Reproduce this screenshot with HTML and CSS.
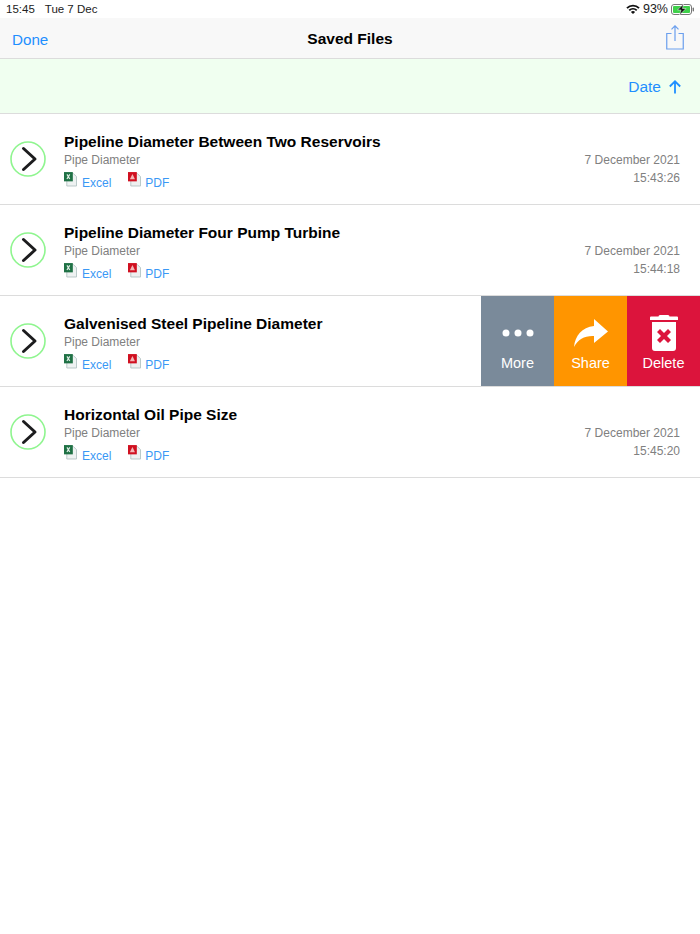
FILE: index.html
```html
<!DOCTYPE html>
<html lang="en">
<head>
<meta charset="utf-8">
<title>Saved Files</title>
<link rel="stylesheet" href="styles.css">
</head>
<body>
<svg class="defs" width="0" height="0" aria-hidden="true">
  <defs>
    <symbol id="chev" viewBox="0 0 36 36">
      <circle cx="18" cy="18" r="17" fill="#fff" stroke="#8ff58f" stroke-width="1.6"/>
      <path d="M13.500 7.500 L25 18 L13.500 28.500" fill="none" stroke="#1c1c1e" stroke-width="3" stroke-linecap="round" stroke-linejoin="round"/>
    </symbol>
    <symbol id="xls" viewBox="0 0 14 16">
      <path d="M3 1.500h7l3.500 3.500v10H3z" fill="#eef2f2" stroke="#b4c4c4" stroke-width="1"/>
      <rect x="0" y="0" width="9.500" height="10" fill="#1f7145"/>
      <path d="M3.200 2.500l3 5M6.200 2.500l-3 5" stroke="#dfeee5" stroke-width="1.300"/>
    </symbol>
    <symbol id="pdf" viewBox="0 0 14 16">
      <path d="M3 1.500h7l3.500 3.500v10H3z" fill="#eef0f0" stroke="#b4c4c4" stroke-width="1"/>
      <rect x="0" y="0" width="9.500" height="10" fill="#d01020"/>
      <path d="M4.800 2L2 7.800h5.500z" fill="#f3b6b6"/>
    </symbol>
  </defs>
</svg>

<header class="status">
  <div class="status-left"><span>15:45</span><span>Tue 7 Dec</span></div>
  <div class="status-right">
    <svg class="wifi" width="14" height="10" viewBox="0 0 14 10"><path d="M0.300 3.400a9.600 9.600 0 0 1 13.400 0l-1.300 1.300a7.800 7.800 0 0 0-10.800 0zM2.600 5.700a6.400 6.400 0 0 1 8.800 0L10.100 7a4.600 4.600 0 0 0-6.200 0zM4.900 7.900a3.100 3.100 0 0 1 4.200 0L7 10z" fill="#111"/></svg>
    <span>93%</span>
    <svg class="battery" width="24" height="11" viewBox="0 0 24 11"><rect x="0.500" y="0.500" width="20" height="10" rx="2.500" fill="none" stroke="#777"/><rect x="2" y="2" width="17" height="7" rx="1" fill="#3ed04a"/><rect x="21.600" y="3.500" width="1.400" height="4" rx="0.700" fill="#777"/><path d="M12.500 0L6.500 6h3.500L8.500 11l6.500-6.500h-3.500z" fill="#111" stroke="#fff" stroke-width="0.500"/></svg>
  </div>
</header>

<nav class="navbar">
  <a class="done">Done</a>
  <h1>Saved Files</h1>
  <svg class="share" width="18" height="25" viewBox="0 0 18 25"><path d="M5.500 8.500H.75v15.500h16.500V8.500H12.500M9 16V1M5.500 4.300L9 .8l3.500 3.500" fill="none" stroke="#6b9fee" stroke-width="1.200"/></svg>
</nav>

<div class="sortbar">
  <span>Date</span>
  <svg width="14" height="14" viewBox="0 0 14 14"><path d="M7 13.500V1.500M1.800 6.500L7 1.300l5.200 5.200" fill="none" stroke="#1f8fff" stroke-width="1.800"/></svg>
</div>

<main class="list">
  <article class="row">
    <svg class="go"><use href="#chev"/></svg>
    <div class="info">
      <h2>Pipeline Diameter Between Two Reservoirs</h2>
      <p>Pipe Diameter</p>
      <div class="links"><span class="file"><svg class="ficon"><use href="#xls"/></svg><a>Excel</a></span><span class="file"><svg class="ficon"><use href="#pdf"/></svg><a>PDF</a></span></div>
    </div>
    <div class="when"><span>7 December 2021</span><span>15:43:26</span></div>
  </article>
  <article class="row">
    <svg class="go"><use href="#chev"/></svg>
    <div class="info">
      <h2>Pipeline Diameter Four Pump Turbine</h2>
      <p>Pipe Diameter</p>
      <div class="links"><span class="file"><svg class="ficon"><use href="#xls"/></svg><a>Excel</a></span><span class="file"><svg class="ficon"><use href="#pdf"/></svg><a>PDF</a></span></div>
    </div>
    <div class="when"><span>7 December 2021</span><span>15:44:18</span></div>
  </article>
  <article class="row">
    <svg class="go"><use href="#chev"/></svg>
    <div class="info">
      <h2>Galvenised Steel Pipeline Diameter</h2>
      <p>Pipe Diameter</p>
      <div class="links"><span class="file"><svg class="ficon"><use href="#xls"/></svg><a>Excel</a></span><span class="file"><svg class="ficon"><use href="#pdf"/></svg><a>PDF</a></span></div>
    </div>
    <div class="actions">
      <div class="action more">
        <svg width="32" height="10" viewBox="0 0 32 10"><circle cx="4" cy="5" r="3.500"/><circle cx="16" cy="5" r="3.500"/><circle cx="28" cy="5" r="3.500"/></svg>
        <span>More</span>
      </div>
      <div class="action sharing">
        <svg width="36" height="30" viewBox="0 0 36 30"><path d="M21 1l14 12.500L21 25v-7C12 17.500 5 21 1 29 2 18 9 9 21 8z"/></svg>
        <span>Share</span>
      </div>
      <div class="action delete">
        <svg width="28" height="36" viewBox="0 0 28 36"><path d="M10 0h8a1.500 1.500 0 0 1 1.500 1.500H27a1 1 0 0 1 1 1V5H0V2.500a1 1 0 0 1 1-1h7.500A1.500 1.500 0 0 1 10 0z"/><path fill-rule="evenodd" d="M2 7h24v26a3 3 0 0 1-3 3H5a3 3 0 0 1-3-3zM10 14l-3 3 4 4-4 4 3 3 4-4 4 4 3-3-4-4 4-4-3-3-4 4z"/></svg>
        <span>Delete</span>
      </div>
    </div>
  </article>
  <article class="row">
    <svg class="go"><use href="#chev"/></svg>
    <div class="info">
      <h2>Horizontal Oil Pipe Size</h2>
      <p>Pipe Diameter</p>
      <div class="links"><span class="file"><svg class="ficon"><use href="#xls"/></svg><a>Excel</a></span><span class="file"><svg class="ficon"><use href="#pdf"/></svg><a>PDF</a></span></div>
    </div>
    <div class="when"><span>7 December 2021</span><span>15:45:20</span></div>
  </article>
</main>
</body>
</html>
```
FILE: styles.css
```css
* { box-sizing: border-box; margin: 0; padding: 0; }
html, body { height: 100%; }
body { background: #fff; font-family: "Liberation Sans", Arial, sans-serif; color: #000; overflow: hidden; }
.defs { position: absolute; }

.status { height: 18px; display: flex; justify-content: space-between; align-items: center; padding: 0 5px 0 6px; font-size: 11.500px; color: #222; }
.status-left { display: flex; gap: 10px; }
.status-right { display: flex; align-items: center; gap: 3px; font-size: 12.500px; }

.navbar { height: 41px; background: #f8f8f8; border-bottom: 1px solid #dcdcdc; display: flex; align-items: center; justify-content: space-between; padding: 2px 16px 0 12px; position: relative; }
.done { font-size: 15.200px; color: #1f8fff; }
.navbar h1 { position: absolute; left: 0; right: 0; text-align: center; font-size: 15.500px; font-weight: 700; }
.share { margin-bottom: 3px; }

.sortbar { height: 55px; background: #f0fff0; border-bottom: 1px solid #dcdcdc; display: flex; align-items: center; justify-content: flex-end; gap: 7px; padding: 2px 18px 0 0; font-size: 15.500px; color: #1f8fff; }

.row { height: 91px; border-bottom: 1px solid #dcdcdc; display: flex; align-items: center; position: relative; padding: 0 20px 0 10px; }
.go { width: 36px; height: 36px; flex: none; margin-right: 18px; }
.info { flex: 1; min-width: 0; align-self: flex-start; padding-top: 18px; }
.info h2 { font-size: 15.500px; font-weight: 700; line-height: 20px; }
.info p { font-size: 12px; color: #808080; line-height: 16px; }
.links { display: flex; gap: 17px; margin-top: 4px; }
.file { display: flex; align-items: flex-start; gap: 5px; font-size: 12px; color: #3a98f5; line-height: 16px; }
.file + .file { gap: 4px; }
.file a { padding-top: 3px; }
.ficon { width: 13px; height: 15px; flex: none; }
.when { display: flex; flex-direction: column; align-items: flex-end; gap: 3px; margin-top: 20px; font-size: 12px; color: #808080; line-height: 15px; }

.actions { position: absolute; top: 0; right: 0; bottom: 0; display: flex; }
.action { width: 73px; display: flex; flex-direction: column; align-items: center; justify-content: flex-end; color: #fff; font-size: 14.500px; padding-bottom: 14px; fill: #fff; }
.action span { line-height: 17px; }
.more { background: #7a8a9a; }
.more svg { margin-bottom: 17px; }
.sharing { background: #ff9500; }
.sharing svg { margin-bottom: 7px; }
.delete { background: #dc143c; }
.delete svg { margin-bottom: 4px; }
```
